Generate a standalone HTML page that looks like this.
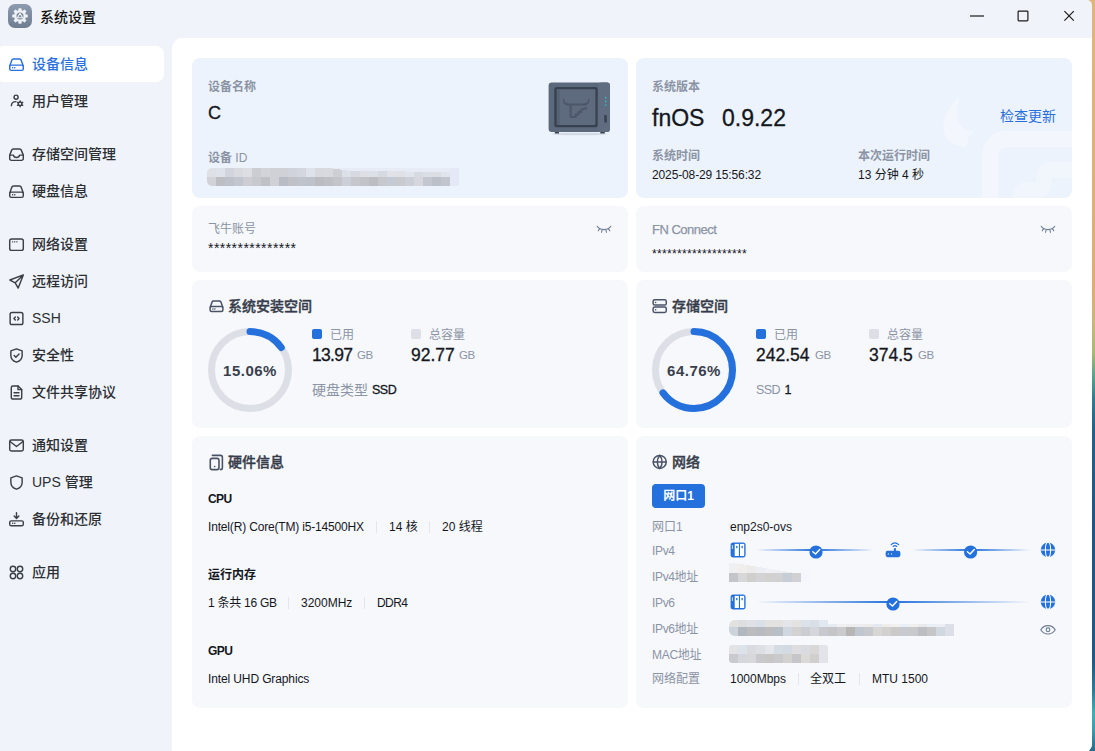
<!DOCTYPE html>
<html lang="zh-CN">
<head>
<meta charset="utf-8">
<title>系统设置</title>
<style>
*{box-sizing:border-box;margin:0;padding:0}
html,body{width:1095px;height:751px;overflow:hidden}
body{position:relative;background:#f0f4fa;font-family:"Liberation Sans","Noto Sans CJK SC",sans-serif;font-size:12px;color:#1b1f26;-webkit-font-smoothing:antialiased}
.abs{position:absolute}
.t{position:absolute;white-space:nowrap;line-height:1}
/* wallpaper strip + window */
#wall{position:absolute;left:1085px;top:0;width:10px;height:751px;background:linear-gradient(180deg,#e0b57c 0,#dcae76 39%,#c9b878 43%,#a9b873 47%,#5aa38c 50%,#2e7f8f 53%,#23638a 57%,#1f5687 70%,#1f5a88 88%,#2a7f98 92%,#3fb0b5 95%,#3a9fae 97%,#246c8c 100%)}
#win{position:absolute;left:0;top:0;width:1092px;height:753px;background:#f0f4fa;border-radius:0 5px 9px 0;overflow:hidden}
#panel{position:absolute;left:172px;top:38px;width:920px;height:713px;background:#fff;border-radius:10px 0 0 0}
/* title bar */
#appicon{position:absolute;left:8px;top:4px;width:24px;height:24px;border-radius:7px;background:linear-gradient(180deg,#8d9bb0,#6f7d92)}
#title{left:40px;top:9.500px;font-size:14px;font-weight:500;color:#111}
/* sidebar */
.nav{position:absolute;left:0;width:164px;height:36px;border-radius:0 8px 8px 0}
.nav.on{background:transparent}.nav.on:before{content:"";position:absolute;left:-4px;top:0;width:168px;height:36px;border-radius:8px;background:#fff}
.nav svg{position:absolute;left:7.500px;top:9.500px;width:17px;height:17px;fill:none;stroke:#3b3f46;stroke-width:1.35;stroke-linecap:round;stroke-linejoin:round}
.nav.on svg{stroke:#2a6fe0}
.nav span{position:absolute;left:32px;top:10px;font-size:14px;line-height:16px;font-weight:500;color:#2b2e33;white-space:nowrap}
.nav.on span{color:#2a6fe0}
/* cards */
.card{position:absolute;border-radius:8px;background:#f7f8fc;overflow:hidden}
.card.blue{background:#edf3fc}
.lbl{color:#8b94a5;font-weight:700;font-size:12px}
.g{color:#8b94a5}

.b{font-weight:700}
.d{color:#14171c}
.h14{font-size:14px;font-weight:500;color:#363c49;-webkit-text-stroke:0.35px #363c49}
.num{font-size:17.500px;color:#14171c;-webkit-text-stroke:0.3px #14171c}
.unit{font-size:11.500px;color:#8b94a5;letter-spacing:-0.4px}
.sq{position:absolute;width:10px;height:10px;border-radius:2px}
.vd{position:absolute;width:1px;height:12px;background:#e3e6ec}
.ico{position:absolute;fill:none;stroke:#4a5366;stroke-width:1.5;stroke-linecap:round;stroke-linejoin:round}
.mos{position:absolute;display:flex}
.mos i{display:block;height:100%;flex:1}
</style>
</head>
<body>
<div id="wall"></div>
<div id="win">
<div id="panel"></div>
<div id="appicon"><svg viewBox="0 0 24 24" width="24" height="24" style="position:absolute;left:0;top:0"><g fill="#edf0f4"><rect x="10.4" y="4.2" width="3.200" height="3.600" rx=".7" transform="rotate(0 12 12)"/><rect x="10.4" y="4.2" width="3.200" height="3.600" rx=".7" transform="rotate(45 12 12)"/><rect x="10.4" y="4.2" width="3.200" height="3.600" rx=".7" transform="rotate(90 12 12)"/><rect x="10.4" y="4.2" width="3.200" height="3.600" rx=".7" transform="rotate(135 12 12)"/><rect x="10.4" y="4.2" width="3.200" height="3.600" rx=".7" transform="rotate(180 12 12)"/><rect x="10.4" y="4.2" width="3.200" height="3.600" rx=".7" transform="rotate(225 12 12)"/><rect x="10.4" y="4.2" width="3.200" height="3.600" rx=".7" transform="rotate(270 12 12)"/><rect x="10.4" y="4.2" width="3.200" height="3.600" rx=".7" transform="rotate(315 12 12)"/><circle cx="12" cy="12" r="6"/></g><circle cx="12" cy="12" r="3.500" fill="#7c8a9f"/><path d="M12 9.300l2.600 4.400h-5.200z" fill="none" stroke="#edf0f4" stroke-width="1.100" stroke-linejoin="round"/></svg></div>
<div class="t" id="title">系统设置</div>
<svg class="abs" style="left:960px;top:0" width="132" height="38" viewBox="0 0 132 38" fill="none" stroke="#1a1a1a" stroke-width="1.2"><path d="M10 16h14"/><rect x="58.100" y="11.100" width="9.800" height="9.800" rx="0.800"/><path d="M104.400 11.200l9.400 9.400M113.800 11.200l-9.400 9.400"/></svg>
<div class="nav on" style="top:46px"><svg viewBox="0 0 16 16"><path d="M1.7 9.2 3.6 3.9A1.6 1.6 0 0 1 5.1 2.9h5.8a1.6 1.6 0 0 1 1.5 1l1.9 5.3"/><rect x="1.6" y="8.6" width="12.8" height="4.9" rx="1.5"/><path d="M4.3 11.1h.1M6.3 11.1h.1"/></svg><span>设备信息</span></div>
<div class="nav" style="top:83px"><svg viewBox="0 0 16 16"><circle cx="7.600" cy="3.900" r="1.900"/><path d="M3.200 11.900c0-2.200 1.700-3.800 4.300-3.800"/><circle cx="11.4" cy="10.2" r="1.700"/><path d="M13.13 11.20L13.82 11.60M11.40 12.20L11.40 13.00M9.67 11.20L8.98 11.60M9.67 9.20L8.98 8.80M11.40 8.20L11.40 7.40M13.13 9.20L13.82 8.80"/></svg><span>用户管理</span></div>
<div class="nav" style="top:136px"><svg viewBox="0 0 16 16"><path d="M1.6 8.6 3.5 3.9A1.6 1.6 0 0 1 5 2.9h6a1.6 1.6 0 0 1 1.500 1l1.900 4.700v3.300a1.600 1.600 0 0 1-1.600 1.600H3.200a1.600 1.600 0 0 1-1.600-1.600z"/><path d="M1.700 8.600h3.400c.2 1.300 1.400 2.200 2.900 2.200s2.700-.9 2.900-2.200h3.400"/></svg><span>存储空间管理</span></div>
<div class="nav" style="top:173px"><svg viewBox="0 0 16 16"><path d="M1.7 9.2 3.6 3.9A1.6 1.6 0 0 1 5.1 2.9h5.8a1.6 1.6 0 0 1 1.5 1l1.9 5.3"/><rect x="1.6" y="8.6" width="12.8" height="4.9" rx="1.5"/><path d="M4.3 11.1h.1M6.3 11.1h.1"/></svg><span>硬盘信息</span></div>
<div class="nav" style="top:226px"><svg viewBox="0 0 16 16"><rect x="1.600" y="2.900" width="12.800" height="10.600" rx="1.800"/><path d="M4.300 5.500h.1M6.300 5.500h.1M8.300 5.500h.1"/></svg><span>网络设置</span></div>
<div class="nav" style="top:263px"><svg viewBox="0 0 16 16"><path d="M14.400 1.800 1.800 6.600 6.800 9.200 9.600 14.200zM6.800 9.200 14.400 1.800"/></svg><span>远程访问</span></div>
<div class="nav" style="top:300px"><svg viewBox="0 0 16 16"><rect x="2" y="2.300" width="12" height="11.400" rx="1.800"/><path d="M6.900 6.600 5.600 8l1.300 1.400M9.100 6.600 10.400 8 9.100 9.400"/></svg><span>SSH</span></div>
<div class="nav" style="top:337px"><svg viewBox="0 0 16 16"><path d="M8 1.800 13.300 3.700v4.200c0 3-2.100 5.200-5.300 6.400C4.800 13.100 2.700 10.900 2.700 7.900V3.700z"/><path d="M5.800 8.100 7.400 9.700l3-3.100"/></svg><span>安全性</span></div>
<div class="nav" style="top:374px"><svg viewBox="0 0 16 16"><path d="M9.500 1.800H4.600A1.500 1.500 0 0 0 3.100 3.300v9.400a1.500 1.500 0 0 0 1.500 1.500h6.800a1.500 1.500 0 0 0 1.500-1.500V5.200z"/><path d="M9.400 1.900v3.400h3.400M5.700 8.300h4.600M5.700 11h4.600"/></svg><span>文件共享协议</span></div>
<div class="nav" style="top:427px"><svg viewBox="0 0 16 16"><rect x="1.600" y="2.900" width="12.800" height="10.200" rx="1.600"/><path d="M1.900 4.200 8 8.900l6.100-4.700"/></svg><span>通知设置</span></div>
<div class="nav" style="top:464px"><svg viewBox="0 0 16 16"><path d="M8 1.800 13.300 3.700v4.200c0 3-2.100 5.200-5.300 6.400C4.800 13.100 2.700 10.900 2.700 7.900V3.700z"/></svg><span>UPS 管理</span></div>
<div class="nav" style="top:501px"><svg viewBox="0 0 16 16"><path d="M8 1.600v5.200M5.800 4.800 8 7l2.200-2.200"/><rect x="1.600" y="9.300" width="12.800" height="4.600" rx="1.500"/><path d="M4.300 11.600h.1M6.300 11.600h.1"/></svg><span>备份和还原</span></div>
<div class="nav" style="top:554px"><svg viewBox="0 0 16 16"><circle cx="4.700" cy="4.700" r="2.550"/><circle cx="11.300" cy="4.700" r="2.550"/><circle cx="4.700" cy="11.300" r="2.550"/><circle cx="11.300" cy="11.300" r="2.550"/></svg><span>应用</span></div>

<!-- row 1 -->
<div class="card blue" style="left:192px;top:58px;width:436px;height:140px"></div>
<div class="card blue" style="left:636px;top:58px;width:436px;height:140px" id="c2"><svg class="abs" style="left:294px;top:30px" width="142" height="110" viewBox="930 88 142 110" fill="none"><path d="M959 97C947 108 939 124 946 137c4 7 12 10 20.500 10l2-9.500 5.500-6.500c-8 0-15-4-16.500-13-1-6 0-14 2-21z" fill="#fff" fill-opacity=".32"/><path d="M990.300 200V155a16 16 0 0 1 16-16H1075" stroke="#fff" stroke-opacity=".32" stroke-width="16.500"/><path d="M1021 200v-4a6 6 0 0 1 6-6h11a6 6 0 0 0 6-6v-8a6 6 0 0 1 6-6h25" stroke="#fff" stroke-opacity=".26" stroke-width="16"/></svg></div>
<div class="t lbl" style="left:208px;top:80.500px">设备名称</div>
<div class="t d" style="left:208px;top:104px;font-size:18px;-webkit-text-stroke:0.3px #14171c">C</div>
<div class="t lbl" style="left:208px;top:151.500px">设备 <span style="font-weight:400">ID</span></div>

<svg class="abs" style="left:544px;top:78px" width="72" height="60" viewBox="544 78 72 60"><ellipse cx="579.500" cy="134" rx="28" ry="1.300" fill="#d5dbe6"/><rect x="554.800" y="131" width="4.200" height="2.600" rx=".6" fill="#3a4352"/><rect x="600.300" y="131" width="4.500" height="2.600" rx=".6" fill="#3a4352"/><rect x="548.600" y="82.600" width="61.400" height="49.400" rx="3.200" fill="#5c687b"/><rect x="598" y="82.600" width="12" height="49.400" rx="3" fill="#606c80"/><rect x="554.300" y="87" width="43.400" height="40.200" rx="2.200" fill="#38414f"/><rect x="556.800" y="89.200" width="38.600" height="35.800" rx=".8" fill="#5e6a7e"/><rect x="556.800" y="89.200" width="3.200" height="35.800" fill="#566275"/><g fill="#4c5769"><path d="M563.800 97.800c-1.900 3.600-.3 7.700 4.600 7.700l.2-2c-3 0-4.700-2-4.800-5.700zM588.600 97.800c1.900 3.600.3 7.700-4.600 7.700l-.2-2c3 0 4.700-2 4.800-5.700z"/></g><g fill="none" stroke="#4c5769" stroke-width="2.200" stroke-linejoin="round" stroke-linecap="round"><path d="M568 104.500h17M570.600 104.800v11a1.200 1.200 0 0 0 1.200 1.200h4v-2.500h2.700v-2.500h2.700v-2.300l5-1.500"/></g><circle cx="605.700" cy="97.700" r=".9" fill="#2fb9b9"/><circle cx="605.700" cy="101.400" r=".9" fill="#2fb9b9"/><circle cx="605.700" cy="105.100" r=".9" fill="#2fb9b9"/><rect x="604.200" y="114.900" width="2.700" height="7.700" rx=".5" fill="#3a4352"/></svg>
<div class="t lbl" style="left:652px;top:80.500px">系统版本</div>
<div class="t d" style="left:652px;top:107px;font-size:23px;-webkit-text-stroke:0.3px #14171c">fnOS</div>
<div class="t d" style="left:722px;top:107px;font-size:23px;-webkit-text-stroke:0.3px #14171c">0.9.22</div>
<div class="t" style="left:1000px;top:109px;font-size:14px;color:#2a6fe0">检查更新</div>
<div class="t lbl" style="left:652px;top:149.500px">系统时间</div>
<div class="t d" style="left:652px;top:169px;font-size:12px;letter-spacing:-0.13px">2025-08-29 15:56:32</div>
<div class="t lbl" style="left:858px;top:149.500px">本次运行时间</div>
<div class="t d" style="left:858px;top:169px;font-size:12px">13 分钟 4 秒</div>
<!-- row 2 -->
<div class="card" style="left:192px;top:206px;width:436px;height:66px"></div>
<div class="card" style="left:636px;top:206px;width:436px;height:66px"></div>
<div class="t g" style="left:208px;top:222.500px;font-size:12px">飞牛账号</div>
<div class="t d" style="left:208px;top:241px;font-size:14px;letter-spacing:0.45px">***************</div>
<div class="t g" style="left:652px;top:223px;font-size:13px;letter-spacing:-0.5px;-webkit-text-stroke:0.25px #8b94a5">FN Connect</div>
<div class="t d" style="left:652px;top:248px;font-size:12px;letter-spacing:0.33px">*******************</div>
<svg class="abs" style="left:596px;top:223px" width="16" height="14" viewBox="0 0 16 14" fill="none" stroke="#6f7d92" stroke-width="1.100" stroke-linecap="round"><path d="M1.200 3.300c2.700 4.400 10.900 4.400 13.600 0M3.300 6.100 2.200 7.800M6 7.300l-.5 2M10 7.300l.5 2M12.700 6.100l1.100 1.700"/></svg><svg class="abs" style="left:1040px;top:223px" width="16" height="14" viewBox="0 0 16 14" fill="none" stroke="#6f7d92" stroke-width="1.100" stroke-linecap="round"><path d="M1.200 3.300c2.700 4.400 10.900 4.400 13.600 0M3.300 6.100 2.200 7.800M6 7.300l-.5 2M10 7.300l.5 2M12.700 6.100l1.100 1.700"/></svg>
<!-- row 3 -->
<div class="card" style="left:192px;top:280px;width:436px;height:148px"></div>
<div class="card" style="left:636px;top:280px;width:436px;height:148px"></div>
<svg class="ico" style="left:208.500px;top:298px" width="16" height="16" viewBox="0 0 16 16"><path d="M1.200 9.200 3.100 3.900A1.600 1.600 0 0 1 4.600 2.900h5.800a1.600 1.600 0 0 1 1.500 1l1.900 5.300"/><rect x="1.100" y="8.600" width="12.800" height="4.900" rx="1.500"/><path d="M3.800 11.100h.1M5.800 11.100h.1"/></svg>
<div class="t h14" style="left:228px;top:299px">系统安装空间</div>
<svg class="abs" style="left:208px;top:328px" width="84" height="84" viewBox="0 0 84 84" fill="none" stroke-width="7"><circle cx="42" cy="42" r="38.500" stroke="#dcdfe6"/><circle cx="42" cy="42" r="38.500" stroke="#2470dc" stroke-linecap="round" stroke-dasharray="36.400 400" transform="rotate(-90 42 42)"/></svg>
<div class="t b" style="left:223px;top:363px;width:54px;text-align:center;font-size:15px;letter-spacing:0.5px;color:#3a3f4c">15.06%</div>
<div class="sq" style="left:312px;top:329px;background:#2470dc"></div>
<div class="t g" style="left:330px;top:329px;font-size:12px">已用</div>
<div class="t num" style="left:312px;top:347px;letter-spacing:-0.7px">13.97</div>
<div class="t unit" style="left:357px;top:350px">GB</div>
<div class="sq" style="left:411px;top:329px;background:#dcdfe6"></div>
<div class="t g" style="left:429px;top:329px;font-size:12px">总容量</div>
<div class="t num" style="left:411px;top:347px">92.77</div>
<div class="t unit" style="left:459px;top:350px">GB</div>
<div class="t g" style="left:312px;top:383px;font-size:14px">硬盘类型</div>
<div class="t d" style="left:372px;top:384px;font-size:12.500px;letter-spacing:-0.5px;-webkit-text-stroke:0.3px #14171c">SSD</div>

<svg class="ico" style="left:652px;top:298px" width="16" height="16" viewBox="0 0 16 16"><rect x="1.100" y="1.700" width="13.200" height="5.400" rx="1.700"/><rect x="1.100" y="9.100" width="13.200" height="5.400" rx="1.700"/><path d="M3.600 4.400h.1M3.600 11.800h.1"/></svg>
<div class="t h14" style="left:672px;top:299px">存储空间</div>
<svg class="abs" style="left:652px;top:328px" width="84" height="84" viewBox="0 0 84 84" fill="none" stroke-width="7"><circle cx="42" cy="42" r="38.500" stroke="#dcdfe6"/><circle cx="42" cy="42" r="38.500" stroke="#2470dc" stroke-linecap="round" stroke-dasharray="156.700 400" transform="rotate(-90 42 42)"/></svg>
<div class="t b" style="left:667px;top:363px;width:54px;text-align:center;font-size:15px;letter-spacing:0.5px;color:#3a3f4c">64.76%</div>
<div class="sq" style="left:756px;top:329px;background:#2470dc"></div>
<div class="t g" style="left:774px;top:329px;font-size:12px">已用</div>
<div class="t num" style="left:756px;top:347px">242.54</div>
<div class="t unit" style="left:815px;top:350px">GB</div>
<div class="sq" style="left:869px;top:329px;background:#dcdfe6"></div>
<div class="t g" style="left:887px;top:329px;font-size:12px">总容量</div>
<div class="t num" style="left:869px;top:347px">374.5</div>
<div class="t unit" style="left:918px;top:350px">GB</div>
<div class="t g" style="left:756px;top:384px;font-size:12.500px"><span style="letter-spacing:-0.6px">SSD</span> <span class="d" style="-webkit-text-stroke:0.3px #14171c;margin-left:1px">1</span></div>
<!-- row 4 -->
<div class="card" style="left:192px;top:436px;width:436px;height:272px"></div>
<div class="card" style="left:636px;top:436px;width:436px;height:272px"></div>
<svg class="ico" style="left:208.800px;top:453.500px" width="17" height="17" viewBox="0 0 16 16"><path d="M3.200 1.300h7.600a1.800 1.800 0 0 1 1.800 1.800v9.800a1.800 1.800 0 0 1-1.800 1.800"/><rect x="1.200" y="4.100" width="8.200" height="10.600" rx="1.800"/><path d="M5.300 11.800h.1"/></svg>
<div class="t h14" style="left:228px;top:455px">硬件信息</div>
<div class="t b d" style="left:208px;top:493px;font-size:12px;letter-spacing:-0.6px">CPU</div>
<div class="t d" style="left:208px;top:521px;font-size:12px;letter-spacing:-0.17px">Intel(R) Core(TM) i5-14500HX</div>
<div class="vd" style="left:376px;top:521px"></div>
<div class="t d" style="left:389px;top:521px;font-size:12px">14 核</div>
<div class="vd" style="left:429px;top:521px"></div>
<div class="t d" style="left:442px;top:521px;font-size:12px">20 线程</div>
<div class="t b d" style="left:208px;top:569px;font-size:12px">运行内存</div>
<div class="t d" style="left:208px;top:597px;font-size:12px;letter-spacing:-0.25px">1 条共 16 GB</div>
<div class="vd" style="left:288px;top:597px"></div>
<div class="t d" style="left:301px;top:597px;font-size:12px">3200MHz</div>
<div class="vd" style="left:364px;top:597px"></div>
<div class="t d" style="left:377px;top:597px;font-size:12px;letter-spacing:-0.6px">DDR4</div>
<div class="t b d" style="left:208px;top:645px;font-size:12px;letter-spacing:-0.6px">GPU</div>
<div class="t d" style="left:208px;top:673px;font-size:12px;letter-spacing:-0.12px">Intel UHD Graphics</div>

<svg class="ico" style="left:652px;top:454px" width="16" height="16" viewBox="0 0 16 16"><circle cx="7.700" cy="7.900" r="6.500"/><path d="M1.200 7.900h13M7.700 1.400c-3.200 3.500-3.200 9.500 0 13M7.700 1.400c3.200 3.500 3.200 9.500 0 13"/></svg>
<div class="t h14" style="left:672px;top:455px">网络</div>
<div class="abs" style="left:652px;top:484px;width:53px;height:24px;border-radius:4px;background:#2470dc"></div>
<div class="t b" style="left:652px;top:490px;width:53px;text-align:center;font-size:12px;color:#fff">网口1</div>
<div class="t g" style="left:652px;top:521px;font-size:12px">网口1</div>
<div class="t d" style="left:730px;top:521px;font-size:12px">enp2s0-ovs</div>
<div class="t g" style="left:652px;top:545px;font-size:12px;letter-spacing:-0.35px">IPv4</div>
<div class="t g" style="left:652px;top:571px;font-size:12px;letter-spacing:-0.35px">IPv4地址</div>
<div class="t g" style="left:652px;top:597px;font-size:12px;letter-spacing:-0.35px">IPv6</div>
<div class="t g" style="left:652px;top:623px;font-size:12px;letter-spacing:-0.35px">IPv6地址</div>
<div class="t g" style="left:652px;top:649px;font-size:12px;letter-spacing:-0.3px">MAC地址</div>
<div class="t g" style="left:652px;top:673px;font-size:12px">网络配置</div>
<div class="t d" style="left:730px;top:673px;font-size:12px">1000Mbps</div>
<div class="vd" style="left:798px;top:673px"></div>
<div class="t d" style="left:810px;top:673px;font-size:12px">全双工</div>
<div class="vd" style="left:859px;top:673px"></div>
<div class="t d" style="left:872px;top:673px;font-size:12px">MTU 1500</div>
<svg class="abs" style="left:0;top:0" width="1095" height="751"><defs><linearGradient id="lg" x1="0" x2="1" y1="0" y2="0"><stop offset="0" stop-color="#2470dc" stop-opacity="0"/><stop offset=".5" stop-color="#2470dc" stop-opacity="1"/><stop offset="1" stop-color="#2470dc" stop-opacity="0"/></linearGradient></defs><rect x="756" y="549" width="118" height="2" fill="url(#lg)"/><rect x="912" y="549" width="118" height="2" fill="url(#lg)"/><rect x="756" y="601" width="274" height="2" fill="url(#lg)"/><g transform="translate(730.6 542.4)"><rect x="0" y="0" width="15" height="15" rx="2.600" fill="#2470dc"/><rect x="4.100" y="1.500" width="4.200" height="12.100" fill="#fff"/><rect x="9.400" y="1.500" width="4.200" height="12.100" fill="#fff"/><rect x="1.300" y="2.700" width="1" height="4" rx=".4" fill="#cfe0f8"/><ellipse cx="6.200" cy="4.700" rx=".75" ry="1.300" fill="#2470dc"/><ellipse cx="11.500" cy="4.700" rx=".75" ry="1.300" fill="#2470dc"/></g><circle cx="816" cy="552" r="6.600" fill="#2470dc"/><path d="M812.8 551.7l2.700 2.300 4.200-4.500" fill="none" stroke="#fff" stroke-width="1.500" stroke-linecap="round" stroke-linejoin="round"/><g transform="translate(885.6 550.8)"><rect x="0" y="0" width="14.800" height="6.400" rx="2.100" fill="#2470dc"/><rect x="8.300" y="-2.700" width="2" height="3.500" fill="#2470dc"/><path d="M5.500 -6.100c2.300-2.200 5.300-2.200 7.600 0M7.500 -4.300c1.100-1.100 2.500-1.100 3.600 0" fill="none" stroke="#2470dc" stroke-width="1.100" stroke-linecap="round"/><path d="M2.900 2.400l-.4 1.600M6 2.400v1.600" stroke="#cfe0f8" stroke-width=".9"/></g><circle cx="970.6" cy="552" r="6.600" fill="#2470dc"/><path d="M967.4 551.7l2.700 2.300 4.200-4.500" fill="none" stroke="#fff" stroke-width="1.500" stroke-linecap="round" stroke-linejoin="round"/><circle cx="1048" cy="549.8" r="7.200" fill="#2470dc"/><path d="M1040.8 550.0h14.400" stroke="#b9d2f4" stroke-width="1.300"/><ellipse cx="1048" cy="549.8" rx="2.600" ry="7.600" fill="none" stroke="#fff" stroke-width="1.100"/><g transform="translate(730.6 594.4)"><rect x="0" y="0" width="15" height="15" rx="2.600" fill="#2470dc"/><rect x="4.100" y="1.500" width="4.200" height="12.100" fill="#fff"/><rect x="9.400" y="1.500" width="4.200" height="12.100" fill="#fff"/><rect x="1.300" y="2.700" width="1" height="4" rx=".4" fill="#cfe0f8"/><ellipse cx="6.200" cy="4.700" rx=".75" ry="1.300" fill="#2470dc"/><ellipse cx="11.500" cy="4.700" rx=".75" ry="1.300" fill="#2470dc"/></g><circle cx="893" cy="604" r="6.600" fill="#2470dc"/><path d="M889.8 603.7l2.700 2.300 4.200-4.500" fill="none" stroke="#fff" stroke-width="1.500" stroke-linecap="round" stroke-linejoin="round"/><circle cx="1048" cy="601.8" r="7.200" fill="#2470dc"/><path d="M1040.8 602.0h14.400" stroke="#b9d2f4" stroke-width="1.300"/><ellipse cx="1048" cy="601.8" rx="2.600" ry="7.600" fill="none" stroke="#fff" stroke-width="1.100"/><g fill="none" stroke="#6f7d92" stroke-width="1.150"><path d="M1040.800 629.800c3.300-5.600 11.100-5.600 14.400 0-3.300 5.600-11.100 5.600-14.400 0z" stroke-linejoin="round"/><circle cx="1048" cy="629.800" r="1.900"/></g></svg>
<svg class="abs" style="left:0;top:0" width="1095" height="751" shape-rendering="crispEdges"><clipPath id="cp1"><rect x="207" y="168" width="260" height="18" rx="5"/></clipPath><g clip-path="url(#cp1)"><rect x="207" y="168" width="9" height="9" fill="rgb(222,224,230)"/><rect x="207" y="177" width="9" height="9" fill="rgb(209,211,217)"/><rect x="216" y="168" width="9" height="9" fill="rgb(221,226,235)"/><rect x="216" y="177" width="9" height="9" fill="rgb(189,190,195)"/><rect x="225" y="168" width="9" height="9" fill="rgb(209,212,220)"/><rect x="225" y="177" width="9" height="9" fill="rgb(190,193,201)"/><rect x="234" y="168" width="9" height="9" fill="rgb(217,218,223)"/><rect x="234" y="177" width="9" height="9" fill="rgb(193,198,207)"/><rect x="243" y="168" width="9" height="9" fill="rgb(220,222,228)"/><rect x="243" y="177" width="9" height="9" fill="rgb(204,206,212)"/><rect x="252" y="168" width="9" height="9" fill="rgb(204,205,210)"/><rect x="252" y="177" width="9" height="9" fill="rgb(200,201,206)"/><rect x="261" y="168" width="9" height="9" fill="rgb(211,212,217)"/><rect x="261" y="177" width="9" height="9" fill="rgb(191,193,199)"/><rect x="270" y="168" width="9" height="9" fill="rgb(207,209,215)"/><rect x="270" y="177" width="9" height="9" fill="rgb(207,209,215)"/><rect x="279" y="168" width="9" height="9" fill="rgb(208,209,214)"/><rect x="279" y="177" width="9" height="9" fill="rgb(185,188,196)"/><rect x="288" y="168" width="9" height="9" fill="rgb(208,211,219)"/><rect x="288" y="177" width="9" height="9" fill="rgb(191,193,199)"/><rect x="297" y="168" width="9" height="9" fill="rgb(211,214,222)"/><rect x="297" y="177" width="9" height="9" fill="rgb(190,195,204)"/><rect x="306" y="168" width="9" height="9" fill="rgb(223,226,234)"/><rect x="306" y="177" width="9" height="9" fill="rgb(189,194,203)"/><rect x="315" y="168" width="9" height="9" fill="rgb(216,217,222)"/><rect x="315" y="177" width="9" height="9" fill="rgb(187,188,193)"/><rect x="324" y="168" width="9" height="9" fill="rgb(217,218,223)"/><rect x="324" y="177" width="9" height="9" fill="rgb(191,192,197)"/><rect x="333" y="168" width="9" height="9" fill="rgb(206,207,212)"/><rect x="333" y="177" width="9" height="9" fill="rgb(195,197,203)"/><rect x="342" y="168" width="9" height="9" fill="rgb(219,224,233)"/><rect x="342" y="177" width="9" height="9" fill="rgb(204,207,215)"/><rect x="351" y="168" width="9" height="9" fill="rgb(214,217,225)"/><rect x="351" y="177" width="9" height="9" fill="rgb(197,199,205)"/><rect x="360" y="168" width="9" height="9" fill="rgb(222,223,228)"/><rect x="360" y="177" width="9" height="9" fill="rgb(193,195,201)"/><rect x="369" y="168" width="9" height="9" fill="rgb(219,224,233)"/><rect x="369" y="177" width="9" height="9" fill="rgb(188,189,194)"/><rect x="378" y="168" width="9" height="9" fill="rgb(212,217,226)"/><rect x="378" y="177" width="9" height="9" fill="rgb(199,200,205)"/><rect x="387" y="168" width="9" height="9" fill="rgb(225,226,231)"/><rect x="387" y="177" width="9" height="9" fill="rgb(197,202,211)"/><rect x="396" y="168" width="9" height="9" fill="rgb(224,225,230)"/><rect x="396" y="177" width="9" height="9" fill="rgb(200,202,208)"/><rect x="405" y="168" width="9" height="9" fill="rgb(223,228,237)"/><rect x="405" y="177" width="9" height="9" fill="rgb(204,207,215)"/><rect x="414" y="168" width="9" height="9" fill="rgb(213,218,227)"/><rect x="414" y="177" width="9" height="9" fill="rgb(214,216,222)"/><rect x="423" y="168" width="9" height="9" fill="rgb(217,222,231)"/><rect x="423" y="177" width="9" height="9" fill="rgb(196,199,207)"/><rect x="432" y="168" width="9" height="9" fill="rgb(220,222,228)"/><rect x="432" y="177" width="9" height="9" fill="rgb(187,192,201)"/><rect x="441" y="168" width="9" height="9" fill="rgb(223,228,237)"/><rect x="441" y="177" width="9" height="9" fill="rgb(194,197,205)"/><rect x="450" y="168" width="9" height="9" fill="rgb(219,222,230)"/><rect x="450" y="177" width="9" height="9" fill="rgb(193,194,199)"/><polygon points="330,168 459,168 459,172 350,171" fill="#e6ebf5"/><rect x="450" y="168" width="9" height="18" fill="#e4e9f5"/></g><rect x="729" y="563" width="9" height="10" fill="rgb(240,240,242)"/><rect x="729" y="573" width="9" height="9" fill="rgb(195,197,203)"/><rect x="738" y="563" width="9" height="10" fill="rgb(240,238,236)"/><rect x="738" y="573" width="9" height="9" fill="rgb(215,215,217)"/><rect x="747" y="563" width="9" height="10" fill="rgb(238,236,234)"/><rect x="747" y="573" width="9" height="9" fill="rgb(209,207,205)"/><rect x="756" y="563" width="9" height="10" fill="rgb(236,238,244)"/><rect x="756" y="573" width="9" height="9" fill="rgb(211,211,214)"/><rect x="765" y="563" width="9" height="10" fill="rgb(239,241,247)"/><rect x="765" y="573" width="9" height="9" fill="rgb(211,209,207)"/><rect x="774" y="563" width="9" height="10" fill="rgb(237,239,245)"/><rect x="774" y="573" width="9" height="9" fill="rgb(209,209,212)"/><rect x="783" y="563" width="9" height="10" fill="rgb(236,236,238)"/><rect x="783" y="573" width="9" height="9" fill="rgb(199,205,213)"/><rect x="792" y="563" width="9" height="10" fill="rgb(234,236,242)"/><rect x="792" y="573" width="9" height="9" fill="rgb(209,209,211)"/><polygon points="729,562 810,562 810,573 795,573" fill="#f7f8fc"/><rect x="801" y="570" width="9" height="12" fill="#f3f6fc"/><clipPath id="cp2"><rect x="729" y="620" width="230" height="16" rx="6"/></clipPath><g clip-path="url(#cp2)"><rect x="729" y="620" width="9" height="7" fill="rgb(227,225,223)"/><rect x="729" y="627" width="9" height="9" fill="rgb(205,211,219)"/><rect x="738" y="620" width="9" height="7" fill="rgb(222,222,225)"/><rect x="738" y="627" width="9" height="9" fill="rgb(178,184,192)"/><rect x="747" y="620" width="9" height="7" fill="rgb(223,225,231)"/><rect x="747" y="627" width="9" height="9" fill="rgb(188,188,190)"/><rect x="756" y="620" width="9" height="7" fill="rgb(218,224,232)"/><rect x="756" y="627" width="9" height="9" fill="rgb(184,186,192)"/><rect x="765" y="620" width="9" height="7" fill="rgb(228,226,224)"/><rect x="765" y="627" width="9" height="9" fill="rgb(189,189,192)"/><rect x="774" y="620" width="9" height="7" fill="rgb(228,226,224)"/><rect x="774" y="627" width="9" height="9" fill="rgb(185,191,199)"/><rect x="783" y="620" width="9" height="7" fill="rgb(227,229,235)"/><rect x="783" y="627" width="9" height="9" fill="rgb(209,215,223)"/><rect x="792" y="620" width="9" height="7" fill="rgb(229,227,225)"/><rect x="792" y="627" width="9" height="9" fill="rgb(212,210,208)"/><rect x="801" y="620" width="9" height="7" fill="rgb(220,226,234)"/><rect x="801" y="627" width="9" height="9" fill="rgb(203,205,211)"/><rect x="810" y="620" width="9" height="7" fill="rgb(217,223,231)"/><rect x="810" y="627" width="9" height="9" fill="rgb(212,214,220)"/><rect x="819" y="620" width="9" height="7" fill="rgb(226,232,240)"/><rect x="819" y="627" width="9" height="9" fill="rgb(199,201,207)"/><rect x="828" y="624" width="9" height="3" fill="rgb(229,235,243)"/><rect x="828" y="627" width="9" height="9" fill="rgb(197,197,199)"/><rect x="837" y="624" width="9" height="3" fill="rgb(240,240,242)"/><rect x="837" y="627" width="9" height="9" fill="rgb(203,203,206)"/><rect x="846" y="624" width="9" height="3" fill="rgb(237,237,239)"/><rect x="846" y="627" width="9" height="9" fill="rgb(184,182,180)"/><rect x="855" y="624" width="9" height="3" fill="rgb(237,237,239)"/><rect x="855" y="627" width="9" height="9" fill="rgb(193,199,207)"/><rect x="864" y="624" width="9" height="3" fill="rgb(238,236,234)"/><rect x="864" y="627" width="9" height="9" fill="rgb(199,201,207)"/><rect x="873" y="624" width="9" height="3" fill="rgb(228,234,242)"/><rect x="873" y="627" width="9" height="9" fill="rgb(217,215,213)"/><rect x="882" y="624" width="9" height="3" fill="rgb(239,237,235)"/><rect x="882" y="627" width="9" height="9" fill="rgb(211,209,207)"/><rect x="891" y="624" width="9" height="3" fill="rgb(242,240,238)"/><rect x="891" y="627" width="9" height="9" fill="rgb(204,202,200)"/><rect x="900" y="624" width="9" height="3" fill="rgb(233,239,247)"/><rect x="900" y="627" width="9" height="9" fill="rgb(200,202,208)"/><rect x="909" y="624" width="9" height="3" fill="rgb(241,239,237)"/><rect x="909" y="627" width="9" height="9" fill="rgb(201,201,203)"/><rect x="918" y="624" width="9" height="3" fill="rgb(234,234,236)"/><rect x="918" y="627" width="9" height="9" fill="rgb(188,190,196)"/><rect x="927" y="624" width="9" height="3" fill="rgb(233,239,247)"/><rect x="927" y="627" width="9" height="9" fill="rgb(198,198,201)"/><rect x="936" y="624" width="9" height="3" fill="rgb(236,238,244)"/><rect x="936" y="627" width="9" height="9" fill="rgb(209,215,223)"/><rect x="945" y="624" width="9" height="3" fill="rgb(236,236,238)"/><rect x="945" y="627" width="9" height="9" fill="rgb(217,215,213)"/><rect x="945" y="624" width="9" height="12" fill="#dcdfe8"/></g><clipPath id="cp3"><rect x="729" y="645" width="99" height="18" rx="3"/></clipPath><g clip-path="url(#cp3)"><rect x="729" y="645" width="9" height="9" fill="rgb(227,227,230)"/><rect x="729" y="654" width="9" height="9" fill="rgb(200,202,208)"/><rect x="738" y="645" width="9" height="9" fill="rgb(221,227,235)"/><rect x="738" y="654" width="9" height="9" fill="rgb(213,215,221)"/><rect x="747" y="645" width="9" height="9" fill="rgb(217,219,225)"/><rect x="747" y="654" width="9" height="9" fill="rgb(216,216,219)"/><rect x="756" y="645" width="9" height="9" fill="rgb(221,223,229)"/><rect x="756" y="654" width="9" height="9" fill="rgb(201,201,204)"/><rect x="765" y="645" width="9" height="9" fill="rgb(228,230,236)"/><rect x="765" y="654" width="9" height="9" fill="rgb(201,199,197)"/><rect x="774" y="645" width="9" height="9" fill="rgb(214,220,228)"/><rect x="774" y="654" width="9" height="9" fill="rgb(202,202,204)"/><rect x="783" y="645" width="9" height="9" fill="rgb(212,218,226)"/><rect x="783" y="654" width="9" height="9" fill="rgb(212,210,208)"/><rect x="792" y="645" width="9" height="9" fill="rgb(222,222,224)"/><rect x="792" y="654" width="9" height="9" fill="rgb(198,198,200)"/><rect x="801" y="645" width="9" height="9" fill="rgb(217,219,225)"/><rect x="801" y="654" width="9" height="9" fill="rgb(220,218,216)"/><rect x="810" y="645" width="9" height="9" fill="rgb(218,216,214)"/><rect x="810" y="654" width="9" height="9" fill="rgb(210,208,206)"/><rect x="819" y="645" width="9" height="9" fill="rgb(225,231,239)"/><rect x="819" y="654" width="9" height="9" fill="rgb(199,199,201)"/><rect x="819" y="645" width="9" height="18" fill="#e2e4ea"/></g></svg>

</div>
</body>
</html>
